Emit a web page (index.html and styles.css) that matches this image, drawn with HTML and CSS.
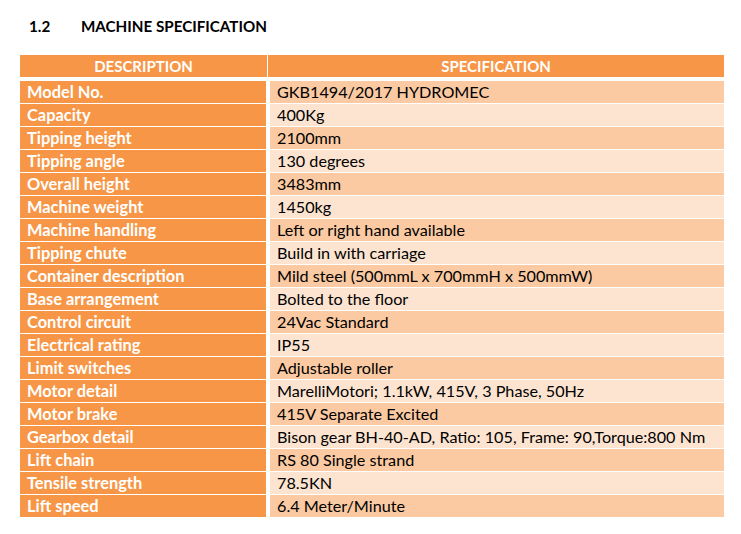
FILE: index.html
```html
<!DOCTYPE html>
<html>
<head>
<meta charset="utf-8">
<link rel="stylesheet" href="styles.css">
</head>
<body>
<h2 class="title"><span class="num">1.2</span><span class="name">MACHINE SPECIFICATION</span></h2>
<div class="spec">
  <div class="head">
    <div class="hcell">DESCRIPTION</div>
    <div class="hcell">SPECIFICATION</div>
  </div>
  <div class="row dark"><div class="key">Model No.</div><div class="val">GKB1494/2017 HYDROMEC</div></div>
  <div class="row light"><div class="key">Capacity</div><div class="val">400Kg</div></div>
  <div class="row dark"><div class="key">Tipping height</div><div class="val">2100mm</div></div>
  <div class="row light"><div class="key">Tipping angle</div><div class="val">130 degrees</div></div>
  <div class="row dark"><div class="key">Overall height</div><div class="val">3483mm</div></div>
  <div class="row light"><div class="key">Machine weight</div><div class="val">1450kg</div></div>
  <div class="row dark"><div class="key">Machine handling</div><div class="val">Left or right hand available</div></div>
  <div class="row light"><div class="key">Tipping chute</div><div class="val">Build in with carriage</div></div>
  <div class="row dark"><div class="key">Container description</div><div class="val">Mild steel (500mmL x 700mmH x 500mmW)</div></div>
  <div class="row light"><div class="key">Base arrangement</div><div class="val">Bolted to the floor</div></div>
  <div class="row dark"><div class="key">Control circuit</div><div class="val">24Vac Standard</div></div>
  <div class="row light"><div class="key">Electrical rating</div><div class="val">IP55</div></div>
  <div class="row dark"><div class="key">Limit switches</div><div class="val">Adjustable roller</div></div>
  <div class="row light"><div class="key">Motor detail</div><div class="val">MarelliMotori; 1.1kW, 415V, 3 Phase, 50Hz</div></div>
  <div class="row dark"><div class="key">Motor brake</div><div class="val">415V Separate Excited</div></div>
  <div class="row light"><div class="key">Gearbox detail</div><div class="val">Bison gear BH-40-AD, Ratio: 105, Frame: 90,Torque:800 Nm</div></div>
  <div class="row dark"><div class="key">Lift chain</div><div class="val">RS 80 Single strand</div></div>
  <div class="row light"><div class="key">Tensile strength</div><div class="val">78.5KN</div></div>
  <div class="row dark"><div class="key">Lift speed</div><div class="val">6.4 Meter/Minute</div></div>
</div>
</body>
</html>
```

FILE: styles.css
```css
html, body {
  margin: 0;
  padding: 0;
  background: #ffffff;
}
body {
  font-family: Lato, "Open Sans", sans-serif;
  color: #000000;
  width: 741px;
}
.title {
  margin: 0;
  padding: 17px 0 0 29px;
  height: 38px;
  box-sizing: border-box;
  display: flex;
  font-size: 15.2px;
  font-weight: 700;
  line-height: 18px;
}
.title .num {
  width: 52px;
}
.spec {
  margin: 17px 0 0 20px;
  width: 704px;
}
.head {
  display: grid;
  grid-template-columns: 247px 456px;
  column-gap: 1px;
  height: 22px;
  margin-bottom: 4px;
}
.hcell {
  background: #f79646;
  color: #ffffff;
  font-weight: 700;
  font-size: 15px;
  line-height: 22px;
  text-align: center;
}
.row {
  display: grid;
  grid-template-columns: 246px 454px;
  column-gap: 4px;
  height: 22px;
  margin-bottom: 1px;
  line-height: 22px;
}
.key {
  background: #f79646;
  color: #ffffff;
  font-weight: 700;
  font-size: 16.4px;
  padding-left: 7px;
  white-space: nowrap;
}
.val {
  font-size: 16.2px;
  padding-left: 7px;
  white-space: nowrap;
}
.dark .val {
  background: #fbcaa2;
}
.light .val {
  background: #fde4d0;
}
```
